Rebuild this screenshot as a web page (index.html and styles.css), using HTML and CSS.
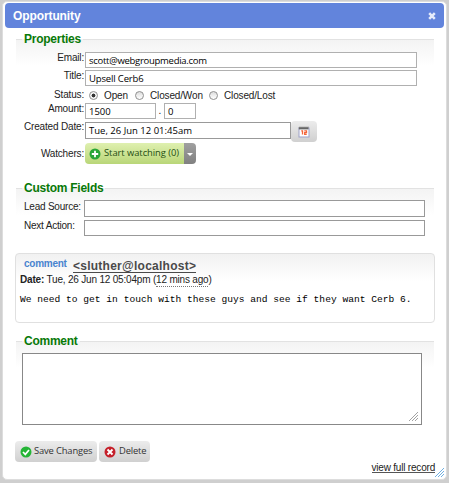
FILE: index.html
```html
<!DOCTYPE html>
<html lang="en">
<head>
<meta charset="utf-8">
<title>Opportunity</title>
<link rel="stylesheet" href="styles.css">
</head>
<body>
<main class="dialog">
  <header class="titlebar">
    <h1>Opportunity</h1>
    <svg class="close" width="8" height="8" viewBox="0 0 8 8"><path d="M1.2 1.2 6.8 6.8M6.8 1.2 1.2 6.8" stroke="#e6ecfb" stroke-width="2.5"/></svg>
  </header>
  <form class="content">
    <section class="group properties">
      <h2><span class="t-prop">Properties</span></h2>
      <div class="row email"><label><span class="l-email">Email:</span></label><div class="field wide"><span class="v-email">scott@webgroupmedia.com</span></div></div>
      <div class="row title"><label><span>Title:</span></label><div class="field wide"><span class="v-title">Upsell Cerb6</span></div></div>
      <div class="row status"><label><span>Status:</span></label>
        <i class="radio on"></i><span class="option open">Open</span>
        <i class="radio"></i><span class="option won">Closed/Won</span>
        <i class="radio"></i><span class="option lost">Closed/Lost</span>
      </div>
      <div class="row amount"><label><span>Amount:</span></label><div class="field whole"><span>1500</span></div><span class="dot">.</span><div class="field cents"><span>0</span></div></div>
      <div class="row created"><label><span>Created Date:</span></label><div class="field date"><span class="v-date">Tue, 26 Jun 12 01:45am</span></div>
        <button type="button" class="btn calendar" aria-label="Calendar"><svg width="12" height="12" viewBox="0 0 12 12"><rect x="1" y="2" width="10" height="9" fill="#fff" stroke="#9da1c8"/><path d="M.8 1h9.7v2.4H.8z" fill="#666"/><path d="M2 0v2M4 0v2M6 0v2M8 0v2M10 0v2" stroke="#aaa" stroke-width=".7"/><path d="M3.2 4.8h1.3v3.8M6.3 4.8h2.2v1.8H6.7v1.8h2" fill="none" stroke="#f4653a" stroke-width="1.3"/></svg></button>
      </div>
      <div class="row watchers"><label><span>Watchers:</span></label>
        <button type="button" class="btn watch"><svg width="12" height="12" viewBox="0 0 12 12"><circle cx="6" cy="6" r="5.5" fill="#28a637"/><path d="M6 2.8v6.4M2.8 6h6.4" stroke="#fff" stroke-width="1.8"/></svg><span class="b-watch">Start watching (0)</span></button><button type="button" class="more" aria-label="More"><i></i></button>
      </div>
    </section>
    <section class="group custom">
      <h2><span class="t-custom">Custom Fields</span></h2>
      <div class="row lead"><label><span>Lead Source:</span></label><div class="field"></div></div>
      <div class="row next"><label><span>Next Action:</span></label><div class="field"></div></div>
    </section>
    <article class="message">
      <div class="author"><span class="kind">comment</span><a>&lt;sluther@localhost&gt;</a></div>
      <p class="when"><b>Date:</b> Tue, 26 Jun 12 05:04pm (<span>12 mins ago</span>)</p>
      <pre>We need to get in touch with these guys and see if they want Cerb 6.</pre>
    </article>
    <section class="group reply">
      <h2><span class="t-comment">Comment</span></h2>
      <div class="textarea"><svg width="9" height="9" viewBox="0 0 9 9"><path d="M0 9 9 0M3 9l6-6M6 9l3-3" stroke="#8a8a8a" stroke-width=".8"/></svg></div>
    </section>
    <div class="actions">
      <button type="button" class="btn save"><svg width="12" height="12" viewBox="0 0 12 12"><circle cx="6" cy="6" r="5.5" fill="#25b536"/><path d="m3 6 2.3 2.4L9 4" fill="none" stroke="#fff" stroke-width="1.7"/></svg><span>Save Changes</span></button>
      <button type="button" class="btn delete"><svg width="12" height="12" viewBox="0 0 12 12"><circle cx="6" cy="6" r="5.5" fill="#c5202a"/><path d="m3.5 3.5 5 5m0-5-5 5" stroke="#fff" stroke-width="1.9"/></svg><span>Delete</span></button>
    </div>
    <footer><a>view full record</a><svg width="9" height="9" viewBox="0 0 9 9"><path d="M0 9 9 0M3 9l6-6M6 9l3-3" stroke="#71b0e2" stroke-width="1"/></svg></footer>
  </form>
</main>
</body>
</html>
```

FILE: styles.css
```css
* { box-sizing: border-box; }
body { margin: 0; width: 449px; height: 483px; overflow: hidden; padding: 1px 2px 3px; background: #cfcfcf; font: 10px/12px "Liberation Sans", sans-serif; color: #222; }
h1, h2, p, pre { margin: 0; }
span, a { white-space: nowrap; }
svg { display: block; flex: none; }
.dialog { height: 479px; background: #fff; border: 1px solid #ddd; border-radius: 5px; padding: 1px 2px 0; }
.titlebar { height: 25px; background: #6284dc; border-radius: 4px; display: flex; align-items: center; justify-content: space-between; padding: 1px 8px; }
h1 { font-size: 12px; line-height: 16px; color: #fff; letter-spacing: -.1px; }
.content { padding: 5px 8px 0 10px; }
.group { margin-left: 1px; width: 418px; }
h2 { height: 12px; display: flex; align-items: center; color: #087908; font-size: 12px; line-height: 12px; letter-spacing: -.25px; }
h2::before { content: ""; width: 6px; height: 1px; background: #e2e2e2; }
h2::after { content: ""; flex: 1; height: 1px; background: #e2e2e2; }
h2 span { padding: 0 2px; }
.group { background: linear-gradient(#f3f3f3, #fff) 0 6px / 100% 27px no-repeat; }
h2 span { background: linear-gradient(#fff 50%, transparent 50%); }
.properties { height: 149px; }
.row { display: flex; align-items: flex-start; }
.row label { width: 68px; margin-right: 1px; text-align: right; line-height: 12px; letter-spacing: -.17px; }
.field { height: 16px; border: 1px solid #999; background: #fff; padding: 1px 3px 0; font: 9.5px/14px "Open Sans", sans-serif; color: #000; }
.wide { width: 332px; border-color: #b0b0b0; }
.v-email { letter-spacing: -.28px; }
.v-title { letter-spacing: -.15px; }
.properties h2 { margin-bottom: 7px; }
.email, .title { height: 18px; }
.status { height: 15px; align-items: center; }
.status label { margin-top: -2px; }
.option { letter-spacing: -.15px; }
.radio { width: 9px; height: 9px; margin: 0 6px 0 4px; border: 1px solid #909090; border-radius: 50%; background: linear-gradient(#ddd, #fff); flex: none; }
.radio.on { background: radial-gradient(#333 0 1.7px, #f3f3f3 2.2px); }
.open { width: 27px; }
.won { width: 55px; }
.amount { height: 19px; }
.whole { width: 71px; }
.cents { width: 32px; }
.whole, .cents { border-color: #b0b0b0; }
.dot { width: 8px; text-align: center; padding-top: 2px; }
.created { height: 21px; }
.created label { margin-top: -1px; }
.date { width: 206px; height: 17px; }
.btn, .more { border: 0; padding: 0; height: 21px; display: flex; align-items: center; font: 9.4px/14px "Open Sans", sans-serif; color: #333; }
.btn { border-radius: 4px; background: linear-gradient(#ececec, #d0d0d0); }
.calendar { width: 26px; justify-content: center; margin-top: -1px; }
.watchers label { padding-top: 5px; }
.watch { width: 99px; padding: 0 0 0 4px; background: linear-gradient(#dff0b0, #b9d678); border-radius: 4px 0 0 4px; color: #254f12; }
.watch span { margin: -2px 0 0 3px; letter-spacing: -.05px; }
.more { width: 12px; background: linear-gradient(#a0a0a0, #808080); border-radius: 0 4px 4px 0; justify-content: center; }
.more i { border: 3px solid transparent; border-top-color: #fff; border-bottom: 0; margin-top: 2px; }
.custom { height: 71px; }
.custom h2 { margin-bottom: 6px; }
.custom label { text-align: left; margin: 1px 0 0 8px; width: 60px; letter-spacing: -.22px; }
.custom .field { width: 341px; height: 17px; }
.lead { height: 20px; }
.next label { margin-top: 0; }
.next .field { height: 16px; }
.message { width: 420px; height: 70px; border: 1px solid #e0e0e0; border-radius: 4px; padding: 4px 4px 0; background: linear-gradient(#f1f1f1, #fff 28px); }
.author { height: 15px; display: flex; align-items: center; }
.kind { font-weight: bold; color: #4984cf; width: 49px; margin: -3px 0 0 4px; letter-spacing: -.25px; }
.author a { font-weight: bold; font-size: 12px; line-height: 14px; letter-spacing: .25px; color: #4a4a4a; border-bottom: 1px solid #4a4a4a; height: 14px; }
.when { height: 18px; padding-top: 1px; white-space: nowrap; letter-spacing: -.19px; }
.when span { border-bottom: 1px dotted #777; padding-bottom: 1px; }
pre { font: 9.6px/12px "Liberation Mono", monospace; margin-top: 3px; color: #000; }
.reply { height: 91px; margin-top: 12px; }
.reply h2 { margin-bottom: 6px; }
.textarea { width: 400px; height: 72px; border: 1px solid #888; background: #fff; margin-left: 6px; display: flex; align-items: flex-end; justify-content: flex-end; padding: 3px; }
.actions { display: flex; gap: 2px; height: 21px; margin-top: 15px; }
.save, .delete { padding-left: 5px; }
.save { width: 82px; }
.delete { width: 51px; }
.actions span { margin: -1px 0 0 2px; letter-spacing: -.15px; }
.actions .delete span { margin-left: 3px; }
footer { display: flex; justify-content: flex-end; align-items: flex-start; margin: 0 -8px 0 0; }
footer a { border-bottom: 1px solid #555; line-height: 11px; height: 11px; font-size: 10px; letter-spacing: -.2px; }
footer svg { margin: 6px 0 0; }
```
